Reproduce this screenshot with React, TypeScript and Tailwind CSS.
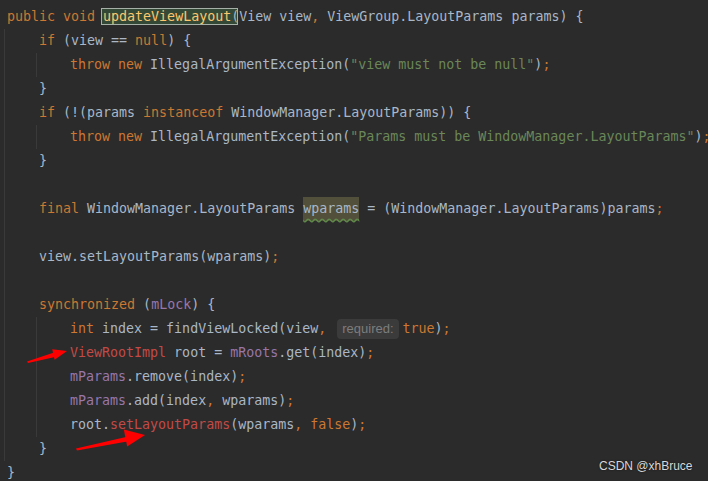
import type { ReactNode } from "react";

const K = ({ children }: { children: ReactNode }) => <span className="text-[#cc7832]">{children}</span>;
const S = ({ children }: { children: ReactNode }) => <span className="text-[#6a8759]">{children}</span>;
const F = ({ children }: { children: ReactNode }) => <span className="text-[#9876aa]">{children}</span>;
const R = ({ children }: { children: ReactNode }) => <span className="text-[#c24a46]">{children}</span>;

function Line({ children }: { children?: ReactNode }) {
  return <div className="h-[24px] leading-[24px] whitespace-pre">{children ?? " "}</div>;
}

function Guide({ children }: { children: ReactNode }) {
  return <div className="ml-[29px] border-l border-[#3a3a3a] pl-[1px]">{children}</div>;
}

export default function App() {
  return (
    <div className="relative h-[481px] w-[708px] overflow-hidden bg-[#2b2b2b] pl-[4px] pt-[5px] font-['DejaVu_Sans_Mono',monospace] text-[13.3px] text-[#a9b7c6]">
      <div className="pl-[3px]">
        <Line>
          <K>public void </K>
          <span className="-ml-[1px] mr-[-6px] bg-[#344a36] pl-[1px] pr-[6px] text-[#ffc66d] outline outline-1 outline-[#a7b0a7]">updateViewLayout</span>
          (View view<K>,</K> ViewGroup.LayoutParams params) {"{"}
        </Line>
      </div>
      <div className="border-l border-[#3a3a3a] pl-[2px]">
        <Line>
          {"    "}<K>if</K> (view == <K>null</K>) {"{"}
        </Line>
        <Guide>
          <Line>
            {"    "}<K>throw new</K> IllegalArgumentException(<S>"view must not be null"</S>)<K>;</K>
          </Line>
        </Guide>
        <Line>{"    }"}</Line>
        <Line>
          {"    "}<K>if</K> (!(params <K>instanceof</K> WindowManager.LayoutParams)) {"{"}
        </Line>
        <Guide>
          <Line>
            {"    "}<K>throw new</K> IllegalArgumentException(<S>"Params must be WindowManager.LayoutParams"</S>)<K>;</K>
          </Line>
        </Guide>
        <Line>{"    }"}</Line>
        <Line />
        <Line>
          {"    "}<K>final</K> WindowManager.LayoutParams{" "}
          <span className="inline-block h-[24px] bg-[#52503a] underline decoration-[#5f8c4a] decoration-wavy underline-offset-[5px]">wparams</span>
          {" "}= (WindowManager.LayoutParams)params<K>;</K>
        </Line>
        <Line />
        <Line>
          {"    "}view.setLayoutParams(wparams)<K>;</K>
        </Line>
        <Line />
        <Line>
          {"    "}<K>synchronized</K> (<F>mLock</F>) {"{"}
        </Line>
        <Guide>
          <Line>
            {"    "}<K>int</K> index = findViewLocked(view<K>,</K>{" "}
            <span className="ml-[3px] mr-[4px] inline-block h-[20px] rounded-[4px] bg-[#3b3b3b] px-[5px] align-middle font-['Liberation_Sans',Arial,sans-serif] text-[13px] leading-[20px] text-[#7d7d7d]">required:</span>
            <K>true</K>)<K>;</K>
          </Line>
          <Line>
            {"    "}<R>ViewRootImpl</R> root = <F>mRoots</F>.get(index)<K>;</K>
          </Line>
          <Line>
            {"    "}<F>mParams</F>.remove(index)<K>;</K>
          </Line>
          <Line>
            {"    "}<F>mParams</F>.add(index<K>,</K> wparams)<K>;</K>
          </Line>
          <Line>
            {"    "}root.<R>setLayoutParams</R>(wparams<K>, false</K>)<K>;</K>
          </Line>
        </Guide>
        <Line>{"    }"}</Line>
      </div>
      <div className="pl-[3px]">
        <Line>{"}"}</Line>
      </div>

      <svg className="pointer-events-none absolute inset-0" width="708" height="481" viewBox="0 0 708 481">
        <polygon points="27,361.5 28,363 55,357 54,352.5" fill="#ff0000" />
        <polygon points="67,351 54.6,359.8 52.2,349.2" fill="#ff0000" />
        <polygon points="76,448.5 77,450.5 127,441.5 126,437" fill="#ff0000" />
        <polygon points="145,435 127.2,446.5 123.8,429.5" fill="#ff0000" />
      </svg>

      <div className="absolute left-[599px] top-[458px] font-['Liberation_Sans',Arial,sans-serif] text-[12px] leading-[16px] text-[#d8d8d8] [text-shadow:0_0_2px_rgba(0,0,0,0.6)]">
        CSDN @xhBruce
      </div>
    </div>
  );
}
